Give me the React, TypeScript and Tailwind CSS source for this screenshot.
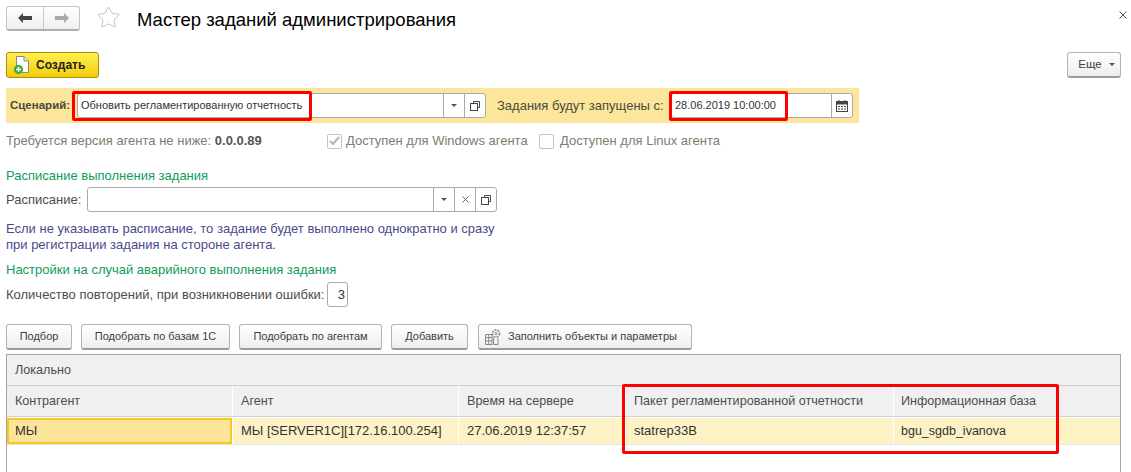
import { Star } from "lucide-react";

const redBox = "absolute border-[3px] border-[#ff0000] rounded-[2px] pointer-events-none";
const btn =
  "h-[26px] flex items-center justify-center rounded-[3px] border border-[#b4b4b4] border-b-2 border-b-[#9c9c9c] bg-gradient-to-b from-white to-[#eeeeee] text-[#404040] text-[11px]";
const headCell = "bg-[#f0f0f0] flex items-center pl-[8px] whitespace-nowrap";
const rowCell = "bg-[#fdf1c6] flex items-center pl-[8px] whitespace-nowrap";

function DropArrow() {
  return <span className="w-0 h-0 border-x-[3px] border-x-transparent border-t-[3px] border-t-[#555555]" />;
}

function OpenIcon() {
  return (
    <svg width="12" height="12" viewBox="0 0 12 12" fill="none" stroke="#444444" strokeWidth="1">
      <path d="M4.5 3.5V1.5H10.5V7.5H8.5" />
      <rect x="1.5" y="3.5" width="7" height="7" />
    </svg>
  );
}

function CalendarIcon() {
  return (
    <svg width="12" height="12" viewBox="0 0 12 12">
      <rect x="0.5" y="1.5" width="11" height="10" fill="#ffffff" stroke="#444444" />
      <rect x="0.5" y="1.5" width="11" height="3" fill="#444444" />
      <path d="M3 0v3M9 0v3" stroke="#444444" />
      <path d="M2 6h2v1H2zM5 6h2v1H5zM8 6h2v1H8zM2 8.5h2v1H2zM5 8.5h2v1H5zM8 8.5h2v1H8z" fill="#444444" />
    </svg>
  );
}

function AddDocIcon() {
  return (
    <svg width="18" height="20" viewBox="0 0 18 20">
      <path d="M3.5 1.5H11L15.5 6V17.5H3.5Z" fill="#fdfdfd" stroke="#8a8a8a" />
      <path d="M11 1.5V6H15.5" fill="#e4e4e4" stroke="#8a8a8a" />
      <circle cx="5.5" cy="14.5" r="4.5" fill="#3bab3f" />
      <path d="M3 14.5h5M5.5 12v5" stroke="#ffffff" strokeWidth="1.6" />
    </svg>
  );
}

function ParamsIcon() {
  return (
    <svg width="18" height="18" viewBox="0 0 18 18" fill="none" stroke="#8a8a8a">
      <path d="M1.5 6.5H8V16.5H1.5ZM4.7 6.5V16.5M1.5 9.5H8M1.5 13H8" />
      <path d="M9.5 9.5V16.5H14V10" />
      <circle cx="12" cy="5.5" r="3.6" strokeDasharray="2 1" strokeWidth="1.6" />
      <circle cx="12" cy="5.5" r="1.2" />
    </svg>
  );
}

function InputBox({ value, className, buttons }: { value?: string; className: string; buttons: React.ReactNode[] }) {
  return (
    <div className={`h-[25px] flex bg-white border border-[#a9a9a9] rounded-[3px] ${className}`}>
      <div className="flex-1 min-w-0 pl-[3px] flex items-center text-[11px] text-[#333333] whitespace-nowrap">{value}</div>
      {buttons.map((b, i) => (
        <div key={i} className="w-[21px] border-l border-[#a9a9a9] flex items-center justify-center">
          {b}
        </div>
      ))}
    </div>
  );
}

export default function App() {
  return (
    <div className="relative w-[1131px] h-[472px] overflow-hidden bg-white font-['Liberation_Sans',Arial,sans-serif] text-[13px] text-[#4d4d4d]">
      <div className="h-[472px] flex flex-col pl-[6px] pr-[10px]">
        {/* title row */}
        <div className="h-[52px] pt-[6px] flex items-start">
          <div className="w-[74px] h-[25px] flex rounded-[3px] border border-[#c4c4c4] border-b-2 border-b-[#b0b0b0] bg-gradient-to-b from-white to-[#efefef]">
            <div className="w-[37px] flex items-center justify-center border-r border-[#c8c8c8]">
              <svg width="14" height="10" viewBox="0 0 14 10" fill="#444444"><path d="M0 5 5 0v3h9v4H5v3z" /></svg>
            </div>
            <div className="flex-1 flex items-center justify-center">
              <svg width="14" height="10" viewBox="0 0 14 10" fill="#a8a8a8"><path d="M14 5 9 0v3H0v4h9v3z" /></svg>
            </div>
          </div>
          <Star size={25} strokeWidth={0.8} className="ml-[16px] mt-[-1px] text-[#b5b5b5]" />
          <h1 className="ml-[16px] text-[18.5px] leading-[28px] text-black font-normal">Мастер заданий администрирования</h1>
          <svg width="8" height="8" viewBox="0 0 8 8" stroke="#555555" className="ml-auto mt-[5px] mr-[-6px]"><path d="M0.5 0.5l7 7M7.5 0.5l-7 7" /></svg>
        </div>

        {/* command bar */}
        <div className="h-[26px] flex justify-between">
          <button className="w-[93px] h-[26px] flex items-center rounded-[3px] border border-[#a88f10] bg-gradient-to-b from-[#fff04a] to-[#f4cb00] pl-[6px] font-bold text-xs text-[#222222]">
            <AddDocIcon />
            <span className="ml-[5px]">Создать</span>
          </button>
          <button className={`${btn} w-[54px] gap-[7px] pl-[5px]`}>
            <span className="text-[11.5px]">Еще</span>
            <DropArrow />
          </button>
        </div>

        {/* scenario band */}
        <div className="mt-[10px] w-[853px] h-[35px] bg-[#fbe69b] flex items-center pl-[4px] text-[#4a4a3a]">
          <span className="font-bold text-[11.5px] w-[67px] whitespace-nowrap">Сценарий:</span>
          <InputBox
            value="Обновить регламентированную отчетность"
            className="w-[409px]"
            buttons={[<DropArrow />, <OpenIcon />]}
          />
          <span className="ml-[11px] w-[174px] whitespace-nowrap">Задания будут запущены с:</span>
          <InputBox value="28.06.2019 10:00:00" className="w-[182px]" buttons={[<CalendarIcon />]} />
        </div>

        {/* agent version */}
        <div className="mt-[10px] h-[16px] flex items-center text-[#7d7d70] whitespace-nowrap">
          <span className="w-[321px]">
            Требуется версия агента не ниже: <b className="text-[#555555]">0.0.0.89</b>
          </span>
          <span className="w-[15px] h-[15px] rounded-[2px] border border-[#c4c4c4] flex items-center justify-center">
            <svg width="11" height="10" viewBox="0 0 11 10" fill="none" stroke="#b5b5b5" strokeWidth="2"><path d="M1 5l3 3 6-7" /></svg>
          </span>
          <span className="ml-[4px] w-[193px]">Доступен для Windows агента</span>
          <span className="w-[15px] h-[15px] rounded-[2px] border border-[#c4c4c4]" />
          <span className="ml-[6px]">Доступен для Linux агента</span>
        </div>

        {/* schedule */}
        <div className="mt-[20px] h-[14px] leading-[14px] text-[#0f9d58]">Расписание выполнения задания</div>
        <div className="mt-[4px] flex items-center">
          <span className="w-[81px]">Расписание:</span>
          <InputBox
            className="w-[410px]"
            buttons={[
              <DropArrow />,
              <svg width="7" height="7" viewBox="0 0 7 7" stroke="#666666"><path d="M0.5 0.5l6 6M6.5 0.5l-6 6" /></svg>,
              <OpenIcon />,
            ]}
          />
        </div>
        <p className="mt-[9px] leading-[16px] text-[#4a4a8c] whitespace-nowrap">
          Если не указывать расписание, то задание будет выполнено однократно и сразу
          <br />
          при регистрации задания на стороне агента.
        </p>
        <div className="mt-[10px] h-[14px] leading-[14px] text-[#0f9d58]">Настройки на случай аварийного выполнения задания</div>
        <div className="mt-[5px] flex items-center">
          <span className="w-[321px] whitespace-nowrap">Количество повторений, при возникновении ошибки:</span>
          <div className="w-[21px] h-[25px] border border-[#a9a9a9] rounded-[3px] flex items-center justify-end pr-[2px] text-[#333333]">3</div>
        </div>

        {/* table commands */}
        <div className="mt-[17px] flex">
          <button className={`${btn} w-[66px]`}>Подбор</button>
          <button className={`${btn} w-[149px] ml-[9px]`}>Подобрать по базам 1С</button>
          <button className={`${btn} w-[143px] ml-[9px]`}>Подобрать по агентам</button>
          <button className={`${btn} w-[77px] ml-[9px]`}>Добавить</button>
          <button className={`${btn} w-[214px] ml-[10px] gap-[6px] justify-start pl-[5px]`}>
            <ParamsIcon />
            Заполнить объекты и параметры
          </button>
        </div>

        {/* table */}
        <div className="mt-[4px] flex-1 min-h-0 border border-[#a5a5a5] border-b-0 text-[12.6px] text-[#4d4d4d]">
          <div className="h-[31px] bg-[#f0f0f0] border-b border-[#d0d0d0] flex items-center pl-[8px]">Локально</div>
          <div className="h-[31px] flex gap-px border-b border-[#d0d0d0]">
            <div className={`${headCell} w-[225px]`}>Контрагент</div>
            <div className={`${headCell} w-[225px]`}>Агент</div>
            <div className={`${headCell} w-[166px]`}>Время на сервере</div>
            <div className={`${headCell} w-[267px]`}>Пакет регламентированной отчетности</div>
            <div className={`${headCell} flex-1 !pl-[7px]`}>Информационная база</div>
          </div>
          <div className="mt-[1px] h-[27px] flex gap-px border-b border-[#e2e2e2] text-[13px] text-[#333333]">
            <div className="w-[225px] bg-[#fce59a] border-2 border-[#f8c81f] flex items-center pl-[6px]">МЫ</div>
            <div className={`${rowCell} w-[225px]`}>МЫ [SERVER1C][172.16.100.254]</div>
            <div className={`${rowCell} w-[166px]`}>27.06.2019 12:37:57</div>
            <div className={`${rowCell} w-[267px]`}>statrep33B</div>
            <div className={`${rowCell} flex-1 !pl-[7px] text-[12.5px]`}>bgu_sgdb_ivanova</div>
          </div>
        </div>
      </div>

      {/* annotations drawn over the form */}
      <div className={`${redBox} left-[72px] top-[91px] w-[240px] h-[30px]`} />
      <div className={`${redBox} left-[669px] top-[91px] w-[119px] h-[30px]`} />
      <div className={`${redBox} left-[622px] top-[384px] w-[437px] h-[70px]`} />
    </div>
  );
}
